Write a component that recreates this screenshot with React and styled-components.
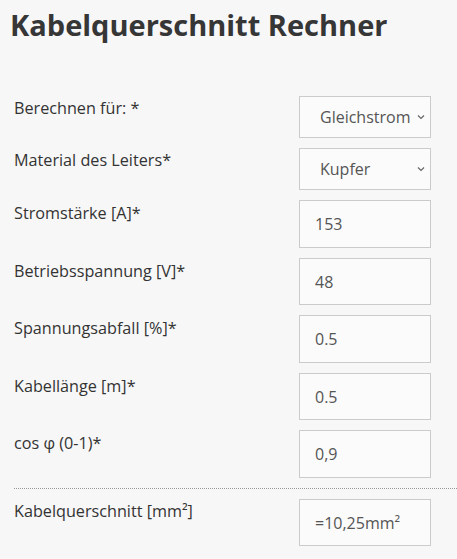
import React from "react";
import styled, { createGlobalStyle } from "styled-components";

const Global = createGlobalStyle`
  html, body { margin: 0; padding: 0; background: #f7f7f7; }
  body { font-family: "Open Sans", "Liberation Sans", sans-serif; color: #333; }
  * { box-sizing: border-box; }
`;

const Page = styled.div`
  width: 457px;
  padding-top: 7px;
`;

const Title = styled.h1`
  margin: 0 0 53px 10px;
  font-size: 29px;
  line-height: 36px;
  font-weight: 700;
  color: #363636;
`;

const Form = styled.div`
  display: grid;
  grid-template-columns: 1fr 132px;
  row-gap: 10px;
  padding-left: 14px;
  padding-right: 26px;
`;

const Label = styled.label`
  font-size: 16.2px;
  line-height: 24px;
  color: #333;
  align-self: start;
  padding-top: ${(p) => p.$offset || 0}px;
`;

const SelectWrap = styled.div`
  position: relative;
  height: 42px;
`;

const Select = styled.select`
  appearance: none;
  -webkit-appearance: none;
  width: 100%;
  height: 100%;
  border: 1px solid #cbcbcb;
  border-radius: 0;
  background: #fbfbfb;
  font-family: inherit;
  font-size: 16px;
  color: #555;
  padding: 0 0 0 20px;
  margin: 0;
  outline: none;
`;

const Chevron = styled.svg`
  position: absolute;
  right: 6px;
  top: 18px;
  width: 8px;
  height: 6px;
  pointer-events: none;
`;

const Input = styled.input`
  width: 100%;
  height: ${(p) => p.$h || 47}px;
  border: 1px solid #cbcbcb;
  border-radius: 0;
  background: #fbfbfb;
  font-family: inherit;
  font-size: 16px;
  color: #555;
  padding: 0 0 0 15px;
  margin: 0;
  outline: none;
`;

const Divider = styled.div`
  grid-column: 1 / -1;
  margin-right: -26px;
  border-top: 1px dotted #999;
`;

const fields = [
  { label: "Stromstärke [A]*", value: "153", h: 48 },
  { label: "Betriebsspannung [V]*", value: "48", h: 47 },
  { label: "Spannungsabfall [%]*", value: "0.5", h: 48 },
  { label: "Kabellänge [m]*", value: "0.5", h: 47 },
  { label: "cos φ (0-1)*", value: "0,9", h: 48 },
];

function SelectField({ value, options }) {
  return (
    <SelectWrap>
      <Select defaultValue={value}>
        {options.map((o) => (
          <option key={o}>{o}</option>
        ))}
      </Select>
      <Chevron viewBox="0 0 8 6">
        <path d="M1 1.5 L4 4.5 L7 1.5" fill="none" stroke="#666" strokeWidth="1.2" />
      </Chevron>
    </SelectWrap>
  );
}

export default function App() {
  return (
    <Page>
      <Global />
      <Title>Kabelquerschnitt Rechner</Title>
      <Form>
        <Label>Berechnen für: *</Label>
        <SelectField value="Gleichstrom" options={["Gleichstrom", "Wechselstrom", "Drehstrom"]} />
        <Label>Material des Leiters*</Label>
        <SelectField value="Kupfer" options={["Kupfer", "Aluminium"]} />
        {fields.map((f) => (
          <React.Fragment key={f.label}>
            <Label $offset={1}>{f.label}</Label>
            <Input $h={f.h} defaultValue={f.value} />
          </React.Fragment>
        ))}
        <Divider />
        <Label>Kabelquerschnitt [mm²]</Label>
        <Input $h={47} readOnly defaultValue="=10,25mm²" />
      </Form>
    </Page>
  );
}
